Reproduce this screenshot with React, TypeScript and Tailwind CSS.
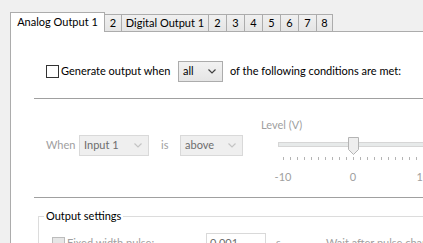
const tabs = [
  { label: "2", w: "w-[18px]" },
  { label: "Digital Output 1", w: "w-[88px]" },
  { label: "2", w: "w-[19px]" },
  { label: "3", w: "w-[19px]" },
  { label: "4", w: "w-[19px]" },
  { label: "5", w: "w-[19px]" },
  { label: "6", w: "w-[19px]" },
  { label: "7", w: "w-[19px]" },
  { label: "8", w: "w-[17px]" },
];

function Chevron({ color }: { color: string }) {
  return (
    <svg width="8" height="5" viewBox="0 0 8 5" className="shrink-0">
      <path d="M0.5 0.5 L4 4 L7.5 0.5" fill="none" stroke={color} strokeWidth="1.2" />
    </svg>
  );
}

function Combo({ value, width, disabled }: { value: string; width: string; disabled?: boolean }) {
  return (
    <div
      className={
        disabled
          ? `${width} h-[21px] shrink-0 flex items-center justify-between pl-[4px] pr-[6px] border border-[#d9d9d9] bg-[#efefef] text-[#6d6d6d]`
          : `${width} h-[21px] shrink-0 flex items-center justify-between pl-[4px] pr-[6px] border border-[#acacac] bg-gradient-to-b from-[#f2f2f2] to-[#e5e5e5] text-black`
      }
    >
      <span className="whitespace-nowrap">{value}</span>
      <Chevron color={disabled ? "#c4c4c4" : "#404040"} />
    </div>
  );
}

function Slider() {
  const ticks = Array.from({ length: 21 }, (_, i) => i);
  return (
    <div className="flex flex-col">
      <div className="mt-[18px] leading-[16px] text-[#a0a0a0] whitespace-nowrap">Level (V)</div>
      <div className="relative ml-[17px] mt-[4px] h-[18px] w-[200px]">
        <div className="mt-[5px] h-[5px] border border-[#d6d6d6] bg-[#e7eaea]" />
        <svg width="11" height="18" viewBox="0 0 11 18" className="absolute left-[70px] top-0">
          <path d="M0.5 0.5 H10.5 V12.5 L5.5 17.5 L0.5 12.5 Z" fill="#eeeeee" stroke="#b4b4b4" />
        </svg>
      </div>
      <div className="ml-[22px] mt-[2px] flex gap-[6px]">
        {ticks.map((t) => (
          <div key={t} className="w-px h-[3px] shrink-0 bg-[#b4b4b4]" />
        ))}
      </div>
      <div className="ml-[12px] mt-[9px] w-[160px] flex justify-between leading-[16px] text-[#a0a0a0]">
        <span className="w-[20px] text-center">-10</span>
        <span className="w-[20px] text-center">0</span>
        <span className="w-[20px] text-center">10</span>
      </div>
    </div>
  );
}

export default function App() {
  return (
    <div className="w-[423px] h-[243px] overflow-hidden bg-[#f0f0f0] flex flex-col text-[11px] font-['Lato',sans-serif] text-black">
      <div className="mt-[12px] ml-[10px] h-[19px] flex items-end">
        <div className="relative z-10 -mb-px h-[20px] w-[95px] shrink-0 bg-white border-l border-t border-r border-[#acacac] flex items-center justify-center pb-[1px] whitespace-nowrap">
          Analog Output 1
        </div>
        {tabs.map((t, i) => (
          <div
            key={i}
            className={`${t.w} -ml-px h-[17px] shrink-0 border-l border-t border-r border-[#acacac] bg-gradient-to-b from-[#f0f0f0] to-[#e5e5e5] flex items-center justify-center whitespace-nowrap`}
          >
            {t.label}
          </div>
        ))}
      </div>

      <div className="ml-[10px] flex-1 bg-white border-l border-t border-[#acacac] flex flex-col">
        <div className="mt-[29px] h-[21px] flex items-center">
          <div className="ml-[35px] w-[13px] h-[13px] border border-[#333333] bg-white shrink-0" />
          <span className="ml-[2px] w-[117px] shrink-0 whitespace-nowrap">Generate output when</span>
          <Combo value="all" width="w-[45px]" />
          <span className="ml-[7px] whitespace-nowrap">of the following conditions are met:</span>
        </div>

        <div className="mt-[16px] ml-[23px] h-px bg-[#a0a0a0]" />

        <div className="h-[98px] flex items-start">
          <div className="mt-[36px] h-[21px] flex items-center">
            <span className="ml-[35px] w-[33px] shrink-0 text-[#a0a0a0]">When</span>
            <Combo value="Input 1" width="w-[70px]" disabled />
            <span className="ml-[12px] w-[19px] shrink-0 text-[#a0a0a0]">is</span>
            <Combo value="above" width="w-[63px]" disabled />
          </div>
          <div className="ml-[18px]">
            <Slider />
          </div>
        </div>

        <div className="ml-[23px] h-px bg-[#a0a0a0]" />

        <fieldset className="mt-[11px] ml-[27px] w-[420px] h-[80px] border border-[#dcdcdc]">
          <legend className="ml-[5px] px-[2px] leading-[14px] whitespace-nowrap">Output settings</legend>
          <div className="mt-[10px] h-[21px] flex items-center text-[#a0a0a0]">
            <div className="ml-[13px] w-[13px] h-[13px] border border-[#bcbcbc] bg-[#e6e6e6] shrink-0" />
            <span className="ml-[2px] w-[139px] shrink-0 whitespace-nowrap">Fixed width pulse:</span>
            <div className="w-[60px] h-[21px] shrink-0 border border-[#d9d9d9] bg-white text-[#6d6d6d] pl-[3px] flex items-center">
              0.001
            </div>
            <span className="ml-[10px] w-[50px] shrink-0">s</span>
            <span className="whitespace-nowrap">Wait after pulse change</span>
          </div>
        </fieldset>
      </div>
    </div>
  );
}
